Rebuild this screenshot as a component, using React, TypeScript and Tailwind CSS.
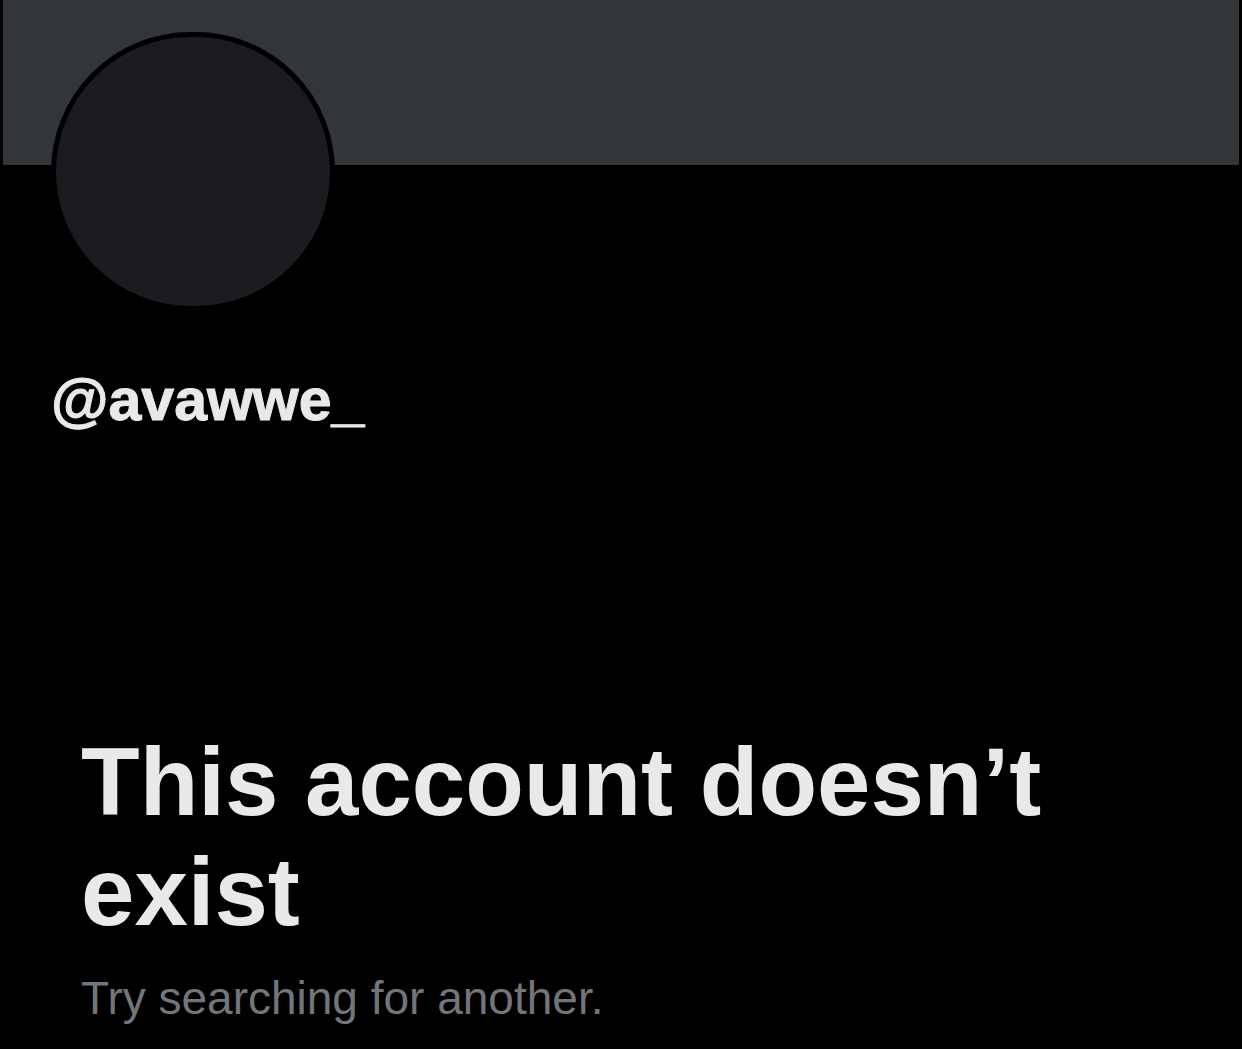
const App = () => {
  return (
    <div className="w-[1242px] h-[1049px] bg-black overflow-hidden font-['Liberation_Sans',Arial,sans-serif]">
      {/* banner */}
      <div className="ml-[3px] mr-[3px] h-[165px] bg-[#333639]" />

      {/* avatar */}
      <div className="ml-[51px] -mt-[133px] w-[284px] h-[279px] rounded-full border-[5px] border-black bg-[#1b1c20]" />

      <div className="ml-[51px] mt-[60px] text-[59px] leading-[58px] font-bold text-[#e7e9ea] [-webkit-text-stroke:1px_#e7e9ea]">
        @avawwe_
      </div>

      <div className="pl-[81px] pr-[120px] mt-[298px]">
        <h1 className="text-[96px] leading-[110px] font-bold text-[#e7e9ea]">
          This account doesn’t exist
        </h1>
        <p className="mt-[29px] text-[46px] leading-[44px] text-[#71767b]">Try searching for another.</p>
      </div>
    </div>
  );
};

export default App;
